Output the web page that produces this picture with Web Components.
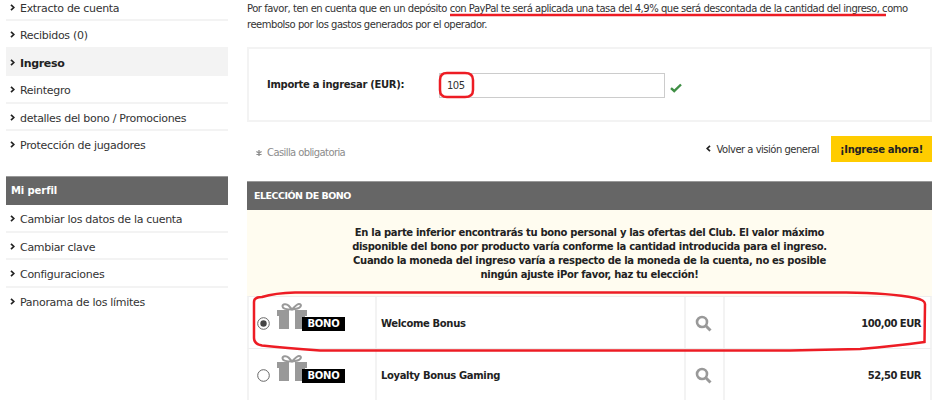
<!DOCTYPE html>
<html lang="es">
<head>
<meta charset="utf-8">
<style>
html, body { margin: 0; padding: 0; background: #fff; }
body { width: 940px; height: 400px; overflow: hidden; position: relative; font: 11px/16px "DejaVu Sans", sans-serif; color: #333; }
</style>
</head>
<body>
<deposit-page></deposit-page>
<script>
// Side menu link
class MenuItem extends HTMLElement {
    constructor() {
        super();
        this.attachShadow({ mode: 'open' });
        this.shadowRoot.innerHTML = `
            <style>
                :host { display: flex; align-items: center; gap: 5px; height: 20.5px; padding: 5px 0 0 4px; border-bottom: 2px solid #f3f3f3; font-size: 11px; letter-spacing: -0.3px; color: #333; }
                :host([active]) { background: #f3f3f3; font-weight: 700; color: #222; letter-spacing: -0.35px; }
                :host([last]) { border-bottom-color: transparent; }
                svg { flex: none; width: 5px; height: 7px; margin-top: -3px; }
            </style>
            <svg viewBox="0 0 5 7"><path d="M1 .8 3.8 3.5 1 6.2" fill="none" stroke="#222" stroke-width="1.7"/></svg>
            <slot></slot>
        `;
    }
}

class SideMenu extends HTMLElement {
    constructor() {
        super();
        this.attachShadow({ mode: 'open' });
        this.shadowRoot.innerHTML = `
            <style>
                :host { display: block; width: 222px; margin-left: 6px; flex: none; }
                .head { height: 28px; line-height: 28px; padding-left: 5px; background: #666; border-top: 1px solid #999; color: #fff; font-weight: 700; font-size: 10px; letter-spacing: -0.1px; }
                .top { margin-top: -6.5px; }
                .gap { height: 17.5px; }
            </style>
            <div class="top">
                <menu-item>Extracto de cuenta</menu-item>
                <menu-item>Recibidos (0)</menu-item>
                <menu-item active>Ingreso</menu-item>
                <menu-item>Reintegro</menu-item>
                <menu-item>detalles del bono / Promociones</menu-item>
                <menu-item last>Protección de jugadores</menu-item>
            </div>
            <div class="gap"></div>
            <div class="head">Mi perfil</div>
            <menu-item>Cambiar los datos de la cuenta</menu-item>
            <menu-item>Cambiar clave</menu-item>
            <menu-item>Configuraciones</menu-item>
            <menu-item last>Panorama de los límites</menu-item>
        `;
    }
}

class AmountPanel extends HTMLElement {
    constructor() {
        super();
        this.attachShadow({ mode: 'open' });
        this.shadowRoot.innerHTML = `
            <style>
                :host { display: flex; align-items: center; height: 75px; box-sizing: border-box; border: 2px solid #f3f3f3; padding: 1px 0 0 18px; }
                label { width: 172px; font-weight: 700; font-size: 10px; letter-spacing: -0.3px; color: #222; }
                .field { width: 226px; height: 25px; box-sizing: border-box; border: 1px solid #ccc; line-height: 23px; padding-left: 7px; font-size: 10px; letter-spacing: -0.5px; color: #333; }
                svg { width: 12px; height: 10px; margin: 6px 0 0 5px; }
            </style>
            <label>Importe a ingresar (EUR):</label>
            <div class="field">105</div>
            <svg viewBox="0 0 12 10"><path d="M1 5.2 4.2 8 11 1.5" fill="none" stroke="#3f8f45" stroke-width="2.4"/></svg>
        `;
    }
}

class ActionBar extends HTMLElement {
    constructor() {
        super();
        this.attachShadow({ mode: 'open' });
        this.shadowRoot.innerHTML = `
            <style>
                :host { display: flex; align-items: center; height: 26px; margin-top: 14px; padding-left: 9px; font-size: 10px; letter-spacing: -0.3px; }
                .req { color: #8c8c8c; flex: 1; margin-top: 8px; display: flex; gap: 5px; align-items: center; letter-spacing: -0.6px; }
                .star { width: 6px; height: 6px; }
                .back { display: flex; align-items: center; gap: 6px; color: #333; letter-spacing: -0.5px; margin: 2px 12px 0 0; }
                .back svg { width: 5px; height: 7px; margin-top: -3px; }
                .go { width: 101px; height: 26px; line-height: 28px; text-align: center; background: #fc0; color: #222; font-weight: 700; font-size: 10px; letter-spacing: -0.3px; }
            </style>
            <div class="req">
                <svg class="star" viewBox="0 0 6 6"><path d="M3 0v6M.4 1.5l5.2 3M.4 4.5l5.2-3" stroke="#8c8c8c" stroke-width="1.3"/></svg>
                <span>Casilla obligatoria</span>
            </div>
            <div class="back">
                <svg viewBox="0 0 5 7"><path d="M4 .8 1.2 3.5 4 6.2" fill="none" stroke="#222" stroke-width="1.7"/></svg>
                <span>Volver a visión general</span>
            </div>
            <div class="go">¡Ingrese ahora!</div>
        `;
    }
}

class BonusRow extends HTMLElement {
    constructor() {
        super();
        this.attachShadow({ mode: 'open' });
        const checked = this.hasAttribute('checked');
        this.shadowRoot.innerHTML = `
            <style>
                :host { display: grid; grid-template-columns: 128px 309px 39px 1fr; height: 52px; box-sizing: border-box; border-top: 1px solid #eee; border-left: 2px solid #f3f3f3; border-right: 2px solid #f3f3f3; font-size: 10px; font-weight: 700; color: #222; }
                .cell { display: flex; align-items: center; border-right: 2px solid #f3f3f3; min-width: 0; padding-top: 2px; }
                .cell:last-child { border-right: 0; justify-content: flex-end; padding-right: 9px; }
                .pick { padding: 1px 0 0 8px; }
                .radio { width: 13px; height: 13px; flex: none; }
                .gift { position: relative; width: 68px; height: 28px; align-self: flex-start; margin: 5px 0 0 7px; }
                .gift svg { width: 30px; height: 26px; display: block; }
                .tag { position: absolute; left: 25px; top: 14px; width: 43px; height: 14px; background: #000; color: #fff; font-size: 10px; line-height: 14px; text-align: center; letter-spacing: -0.2px; }
                .name { padding-left: 4px; font-size: 10px; letter-spacing: -0.35px; }
                .zoom { justify-content: center; padding-right: 2px; }
                .zoom svg { width: 17px; height: 17px; }
                .amount { font-size: 10px; letter-spacing: -0.5px; }
            </style>
            <div class="cell pick">
                <svg class="radio" viewBox="0 0 13 13">
                    <circle cx="6.5" cy="6.5" r="5.8" fill="#fff" stroke="#666"/>
                    ${checked ? '<circle cx="6.5" cy="6.5" r="3.2" fill="#444"/>' : ''}
                </svg>
                <div class="gift">
                    <svg viewBox="0 0 30 26">
                        <rect x="0" y="7" width="30" height="6" fill="#999"/>
                        <rect x="2" y="13" width="26" height="13" fill="#999"/>
                        <rect x="12" y="7" width="6" height="19" fill="#fff"/>
                        <path d="M15 6.5C9 6.5 5.5 5.5 5.5 3.2 5.5.8 9.5.5 11.5 2.5L15 6.5C18.5 2.5 20.5.5 22.5 1 25 1.5 25 5.5 15 6.5Z" fill="none" stroke="#999" stroke-width="2"/>
                    </svg>
                    <span class="tag">BONO</span>
                </div>
            </div>
            <div class="cell name"><slot></slot></div>
            <div class="cell zoom">
                <svg viewBox="0 0 17 17"><circle cx="7" cy="7" r="5" fill="none" stroke="#999" stroke-width="2.6"/><path d="M10.8 10.8 15.5 15.5" stroke="#999" stroke-width="3"/></svg>
            </div>
            <div class="cell amount">${this.getAttribute('amount') || ''}</div>
        `;
    }
}

class BonusSection extends HTMLElement {
    constructor() {
        super();
        this.attachShadow({ mode: 'open' });
        this.shadowRoot.innerHTML = `
            <style>
                :host { display: block; margin-top: 19px; }
                .head { height: 28px; line-height: 28px; padding-left: 7px; background: #666; border-top: 1px solid #999; color: #fff; font-weight: 700; font-size: 9.5px; letter-spacing: -0.5px; }
                .note { height: 86px; box-sizing: border-box; padding-top: 16px; background: #fffcf0; text-align: center; font-weight: 700; font-size: 10px; line-height: 14px; letter-spacing: -0.32px; color: #222; }
            </style>
            <div class="head">ELECCIÓN DE BONO</div>
            <div class="note">En la parte inferior encontrarás tu bono personal y las ofertas del Club. El valor máximo<br>disponible del bono por producto varía conforme la cantidad introducida para el ingreso.<br>Cuando la moneda del ingreso varía a respecto de la moneda de la cuenta, no es posible<br>ningún ajuste iPor favor, haz tu elección!</div>
            <slot></slot>
        `;
    }
}

// Red marker strokes drawn on top of the screenshot
class RedMarks extends HTMLElement {
    constructor() {
        super();
        this.attachShadow({ mode: 'open' });
        this.shadowRoot.innerHTML = `
            <style>
                :host { position: absolute; left: 0; top: 0; width: 940px; height: 400px; pointer-events: none; }
                svg { display: block; }
            </style>
            <svg width="940" height="400" fill="none" stroke="#ed1c24" stroke-width="2.5">
                <path d="M450 15 886 15"/>
                <path d="M447 73H465Q473 73 473 80V90Q473 97 465 97H447Q440 97 440 90V80Q440 73 447 73Z"/>
                <path d="M254 302Q254 297 262 297Q275 293 295 292.5H846Q890 293 915 298Q925 300 925 304L924.5 342Q895 346 860 349L790 350.5H320Q285 348 262 345.5Q254 344 254 338Z"/>
            </svg>
        `;
    }
}

class DepositPage extends HTMLElement {
    constructor() {
        super();
        this.attachShadow({ mode: 'open' });
        this.shadowRoot.innerHTML = `
            <style>
                :host { display: flex; gap: 19px; width: 940px; height: 400px; overflow: hidden; }
                main { width: 685px; flex: none; }
                p { margin: 0; padding-top: 1px; height: 46px; font-size: 10px; line-height: 15.5px; letter-spacing: -0.48px; color: #333; }
            </style>
            <side-menu></side-menu>
            <main>
                <p>Por favor, ten en cuenta que en un depósito con PayPal te será aplicada una tasa del 4,9% que será descontada de la cantidad del ingreso, como<br>reembolso por los gastos generados por el operador.</p>
                <amount-panel></amount-panel>
                <action-bar></action-bar>
                <bonus-section>
                    <bonus-row checked amount="100,00 EUR">Welcome Bonus</bonus-row>
                    <bonus-row amount="52,50 EUR">Loyalty Bonus Gaming</bonus-row>
                </bonus-section>
            </main>
            <red-marks></red-marks>
        `;
    }
}

customElements.define('menu-item', MenuItem);
customElements.define('side-menu', SideMenu);
customElements.define('amount-panel', AmountPanel);
customElements.define('action-bar', ActionBar);
customElements.define('bonus-row', BonusRow);
customElements.define('bonus-section', BonusSection);
customElements.define('red-marks', RedMarks);
customElements.define('deposit-page', DepositPage);
</script>
</body>
</html>
